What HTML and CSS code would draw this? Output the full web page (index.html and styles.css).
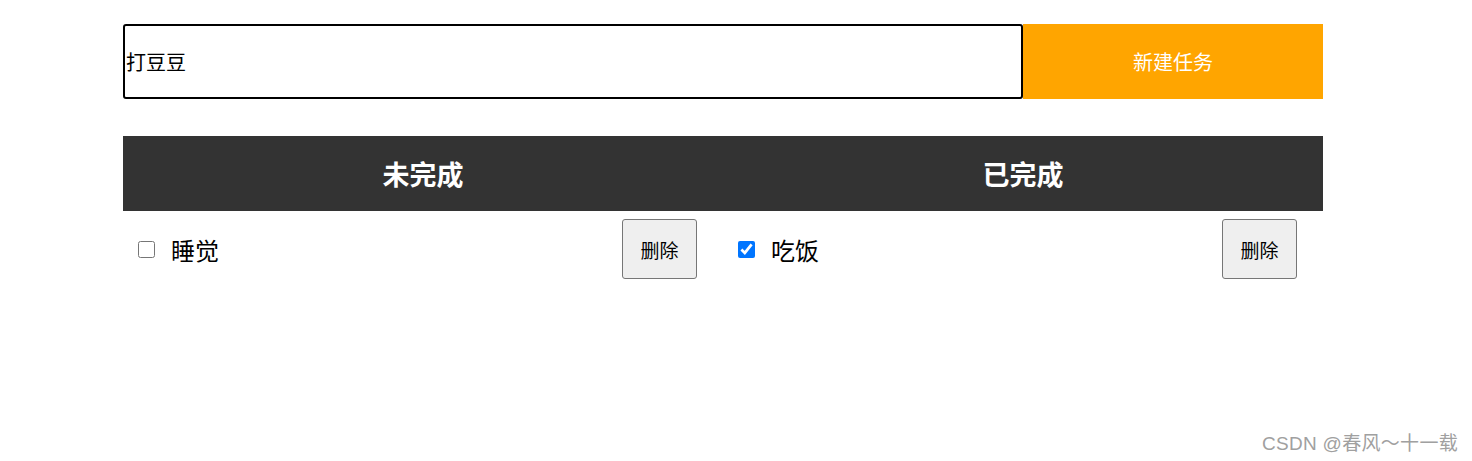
FILE: index.html
```html
<!DOCTYPE html>
<html lang="zh">
<head>
<meta charset="utf-8">
<title>待办</title>
<link rel="stylesheet" href="styles.css">
</head>
<body>
<div class="app">
  <div class="add-bar">
    <input class="add-input" type="text" value="打豆豆">
    <button class="add-btn">新建任务</button>
  </div>
  <div class="board">
    <div class="col">
      <h2 class="col-title">未完成</h2>
      <ul class="list">
        <li class="item">
          <input class="check" type="checkbox">
          <span class="label">睡觉</span>
          <button class="del">删除</button>
        </li>
      </ul>
    </div>
    <div class="col">
      <h2 class="col-title">已完成</h2>
      <ul class="list">
        <li class="item">
          <input class="check" type="checkbox" checked>
          <span class="label">吃饭</span>
          <button class="del">删除</button>
        </li>
      </ul>
    </div>
  </div>
</div>
<div class="watermark">CSDN @春风～十一载</div>
</body>
</html>
```
FILE: styles.css
```css
* { box-sizing: border-box; }
html, body {
  margin: 0;
  padding: 0;
  background: #fff;
  font-family: "Noto Sans CJK SC", "Noto Sans", sans-serif;
}
body {
  width: 1472px;
  height: 461px;
  position: relative;
  overflow: hidden;
}
.app {
  width: 1200px;
  margin-left: 123px;
  padding-top: 24px;
}
.add-bar {
  display: flex;
  height: 75px;
}
.add-input {
  width: 900px;
  height: 75px;
  border: 2px solid #000;
  border-radius: 3px;
  padding: 0 1px;
  margin: 0;
  font-family: "Noto Sans CJK SC", sans-serif;
  font-size: 20px;
  color: #000;
  outline: none;
}
.add-btn {
  width: 300px;
  height: 75px;
  border: none;
  margin: 0;
  background: #ffa500;
  color: #fff;
  font-family: "Noto Sans CJK SC", sans-serif;
  font-size: 20px;
  padding: 0;
}
.board {
  display: grid;
  grid-template-columns: 600px 600px;
  margin-top: 37px;
}
.col-title {
  margin: 0;
  height: 75px;
  background: #333;
  color: #fff;
  font-size: 27px;
  font-weight: bold;
  display: flex;
  align-items: center;
  justify-content: center;
}
.list {
  list-style: none;
  margin: 0;
  padding: 0;
}
.item {
  display: flex;
  align-items: center;
  padding: 8px 26px 8px 15px;
}
.check {
  width: 17px;
  height: 17px;
  margin: 0;
  accent-color: #0075ff;
}
.label {
  margin-left: 16px;
  font-size: 24px;
  color: #000;
  flex: 1;
}
.del {
  width: 75px;
  height: 60px;
  margin: 0;
  padding: 0;
  background: #efefef;
  border: 1px solid #767676;
  border-radius: 3px;
  font-family: "Noto Sans CJK SC", sans-serif;
  font-size: 19px;
  color: #000;
}
.watermark {
  position: absolute;
  right: 14px;
  bottom: 6px;
  font-family: "Liberation Sans", "Noto Sans CJK SC", sans-serif;
  font-size: 19px;
  letter-spacing: 0.3px;
  color: #a0a0a0;
}
```
